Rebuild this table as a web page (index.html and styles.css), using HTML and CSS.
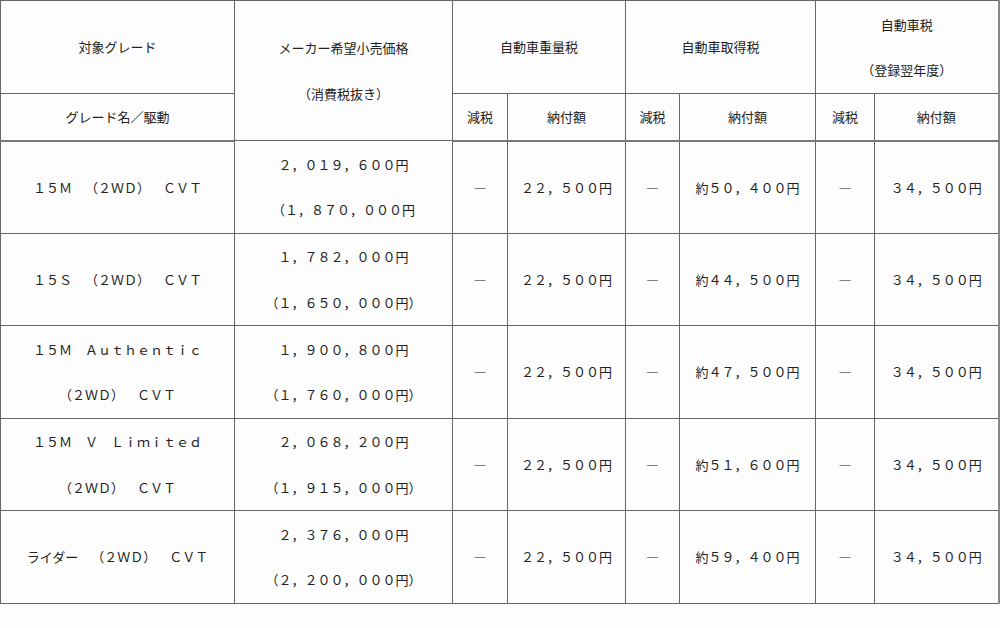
FILE: index.html
```html
<!DOCTYPE html>
<html lang="ja">
<head>
<meta charset="utf-8">
<title>税額表</title>
<link rel="stylesheet" href="styles.css">
</head>
<body>
<table class="tax">
  <colgroup>
    <col class="c1"><col class="c2"><col class="c3"><col class="c4"><col class="c5"><col class="c6"><col class="c7"><col class="c8">
  </colgroup>
  <thead>
    <tr class="h1">
      <th>対象グレード</th>
      <th rowspan="2">メーカー希望小売価格<br>（消費税抜き）</th>
      <th colspan="2">自動車重量税</th>
      <th colspan="2">自動車取得税</th>
      <th colspan="2">自動車税<br>（登録翌年度）</th>
    </tr>
    <tr class="h2">
      <th>グレード名／駆動</th>
      <th>減税</th><th>納付額</th>
      <th>減税</th><th>納付額</th>
      <th>減税</th><th>納付額</th>
    </tr>
  </thead>
  <tbody>
    <tr class="ra">
      <td>１５Ｍ　（２ＷＤ）　ＣＶＴ</td>
      <td>２，０１９，６００円<br>（１，８７０，０００円</td>
      <td>―</td><td>２２，５００円</td>
      <td>―</td><td>約５０，４００円</td>
      <td>―</td><td>３４，５００円</td>
    </tr>
    <tr class="rb">
      <td>１５Ｓ　（２ＷＤ）　ＣＶＴ</td>
      <td>１，７８２，０００円<br>（１，６５０，０００円）</td>
      <td>―</td><td>２２，５００円</td>
      <td>―</td><td>約４４，５００円</td>
      <td>―</td><td>３４，５００円</td>
    </tr>
    <tr class="ra">
      <td>１５Ｍ　Ａｕｔｈｅｎｔｉｃ<br>（２ＷＤ）　ＣＶＴ</td>
      <td>１，９００，８００円<br>（１，７６０，０００円）</td>
      <td>―</td><td>２２，５００円</td>
      <td>―</td><td>約４７，５００円</td>
      <td>―</td><td>３４，５００円</td>
    </tr>
    <tr class="rb">
      <td>１５Ｍ　Ｖ　Ｌｉｍｉｔｅｄ<br>（２ＷＤ）　ＣＶＴ</td>
      <td>２，０６８，２００円<br>（１，９１５，０００円）</td>
      <td>―</td><td>２２，５００円</td>
      <td>―</td><td>約５１，６００円</td>
      <td>―</td><td>３４，５００円</td>
    </tr>
    <tr class="ra">
      <td>ライダー　（２ＷＤ）　ＣＶＴ</td>
      <td>２，３７６，０００円<br>（２，２００，０００円）</td>
      <td>―</td><td>２２，５００円</td>
      <td>―</td><td>約５９，４００円</td>
      <td>―</td><td>３４，５００円</td>
    </tr>
  </tbody>
</table>
</body>
</html>
```

FILE: styles.css
```css
html, body {
  margin: 0;
  padding: 0;
  background: #fdfdfd;
}
body {
  font-family: "Noto Sans CJK JP", "Noto Sans", sans-serif;
  font-size: 13px;
  color: #222;
  text-spacing-trim: space-all;
}
.tax {
  border-collapse: collapse;
  table-layout: fixed;
  width: 998px;
  border-top: 1px solid #333;
  border-left: 1px solid #333;
}
.c1 { width: 234px; }
.c2 { width: 218px; }
.c3 { width: 55px; }
.c4 { width: 118px; }
.c5 { width: 54px; }
.c6 { width: 136px; }
.c7 { width: 59px; }
.c8 { width: 124px; }
.tax th, .tax td {
  border: 1px solid #666;
  padding: 0;
  text-align: center;
  vertical-align: middle;
  font-weight: normal;
  line-height: 45.5px;
  white-space: nowrap;
  text-spacing-trim: space-all;
}
.tax th:last-child, .tax td:last-child {
  border-right: 2px solid #888;
}
.tax thead tr.h2 th {
  border-bottom: 2px solid #777;
}
.h1 { height: 93px; }
.h2 { height: 46px; }
.ra { height: 93px; }
.rb { height: 92px; }
```
